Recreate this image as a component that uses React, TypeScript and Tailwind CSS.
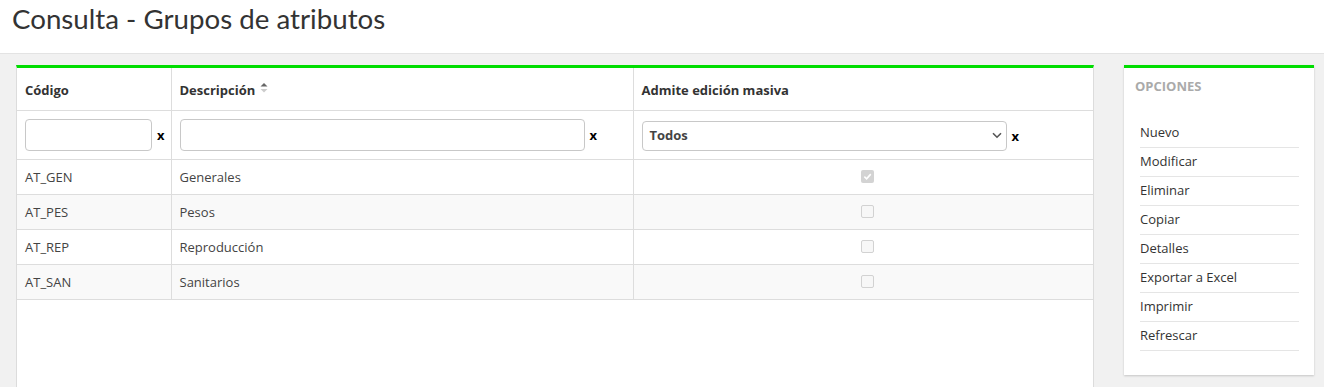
import React from "react";

const rows = [
  { code: "AT_GEN", desc: "Generales", checked: true },
  { code: "AT_PES", desc: "Pesos", checked: false },
  { code: "AT_REP", desc: "Reproducción", checked: false },
  { code: "AT_SAN", desc: "Sanitarios", checked: false },
];

const options = ["Nuevo", "Modificar", "Eliminar", "Copiar", "Detalles", "Exportar a Excel", "Imprimir", "Refrescar"];

function Check({ checked }: { checked: boolean }) {
  if (checked) {
    return (
      <span className="inline-flex h-[13px] w-[13px] items-center justify-center rounded-[2px] bg-[#d3d3d3]">
        <svg width="9" height="9" viewBox="0 0 10 10">
          <path d="M1.5 5.2 L4 7.5 L8.6 2.4" fill="none" stroke="#ffffff" strokeWidth="1.8" />
        </svg>
      </span>
    );
  }
  return <span className="inline-block h-[13px] w-[13px] rounded-[2px] border border-[#d2d2d2] bg-[#f7f7f7]" />;
}

export default function App() {
  return (
    <div className="h-[387px] overflow-hidden bg-[#f1f1f1] text-[#333]" style={{ fontFamily: '"Open Sans", sans-serif' }}>
      <div className="h-[54px] border-b border-[#e3e3e3] bg-white pl-[12px] pt-[3px]">
        <h1 className="text-[27.7px] leading-[32px] text-[#333]" style={{ fontFamily: 'Lato, sans-serif' }}>
          Consulta - Grupos de atributos
        </h1>
      </div>
      <div className="flex items-start gap-[30px] pl-[16px] pt-[11px]">
        <div className="h-[340px] w-[1078px] border-x border-b border-[#dcdcdc] border-t-[3px] border-t-[#00dd00] bg-white">
          <table className="w-full border-collapse text-[13px]">
            <thead>
              <tr className="h-[42px] border-b border-[#ddd] text-left">
                <th className="w-[154px] border-r border-[#ddd] pl-[8px] pt-[3px] font-bold">Código</th>
                <th className="w-[462px] border-r border-[#ddd] pl-[8px] pt-[3px] font-bold">
                  <span className="inline-flex items-center gap-[5px]">
                    Descripción
                    <svg width="8" height="12" viewBox="0 0 8 12" className="mb-[5px]">
                      <path d="M4 1 L7.5 4.5 L0.5 4.5 Z" fill="#666" />
                      <path d="M4 10.5 L7.5 7 L0.5 7 Z" fill="#ccc" />
                    </svg>
                  </span>
                </th>
                <th className="pl-[8px] pt-[3px] font-bold">Admite edición masiva</th>
              </tr>
              <tr className="h-[49px] border-b border-[#ddd]">
                <td className="border-r border-[#ddd] pl-[8px]">
                  <div className="flex items-center gap-[5px]">
                    <input className="h-[32px] w-[127px] rounded-[4px] border border-[#c8c8c8] bg-white outline-none" />
                    <span className="mt-[3px] text-[13px] font-bold text-black">x</span>
                  </div>
                </td>
                <td className="border-r border-[#ddd] pl-[8px]">
                  <div className="flex items-center gap-[5px]">
                    <input className="h-[32px] w-[405px] rounded-[4px] border border-[#c8c8c8] bg-white outline-none" />
                    <span className="mt-[3px] text-[13px] font-bold text-black">x</span>
                  </div>
                </td>
                <td className="pl-[8px]">
                  <div className="flex items-center gap-[5px]">
                    <div className="mt-[2px] flex h-[30px] w-[365px] items-center justify-between rounded-[4px] border border-[#c8c8c8] bg-white pl-[7px] pr-[4px]">
                      <span className="pt-[1px] text-[13px] font-bold text-[#444]">Todos</span>
                      <svg width="10" height="7" viewBox="0 0 10 7">
                        <path d="M1 1.2 L5 5.2 L9 1.2" fill="none" stroke="#555" strokeWidth="1.6" />
                      </svg>
                    </div>
                    <span className="mt-[5px] text-[13px] font-bold text-black">x</span>
                  </div>
                </td>
              </tr>
            </thead>
            <tbody>
              {rows.map((r, i) => (
                <tr key={r.code} className={`h-[35px] border-b border-[#ddd] ${i % 2 === 1 ? "bg-[#f9f9f9]" : "bg-white"}`}>
                  <td className="border-r border-[#ddd] pl-[8px] pt-[2px] text-[#444]">{r.code}</td>
                  <td className="border-r border-[#ddd] pl-[8px] pt-[2px] text-[#444]">{r.desc}</td>
                  <td className="text-center">
                    <span className="inline-flex translate-x-[4px] translate-y-[-1px] align-middle">
                      <Check checked={r.checked} />
                    </span>
                  </td>
                </tr>
              ))}
            </tbody>
          </table>
        </div>
        <div className="w-[190px] border-t-[3px] border-t-[#00dd00] bg-white pb-[24px] shadow-[0_1px_2px_rgba(0,0,0,0.18)]">
          <div className="pl-[11px] pt-[9px] text-[13px] font-bold text-[#aaa]">OPCIONES</div>
          <ul className="mt-[22px] px-[15px] pl-[16px]">
            {options.map((o) => (
              <li key={o} className="flex h-[29px] items-center border-b border-[#e5e5e5] text-[13px] text-[#333]">
                {o}
              </li>
            ))}
          </ul>
        </div>
      </div>
    </div>
  );
}
